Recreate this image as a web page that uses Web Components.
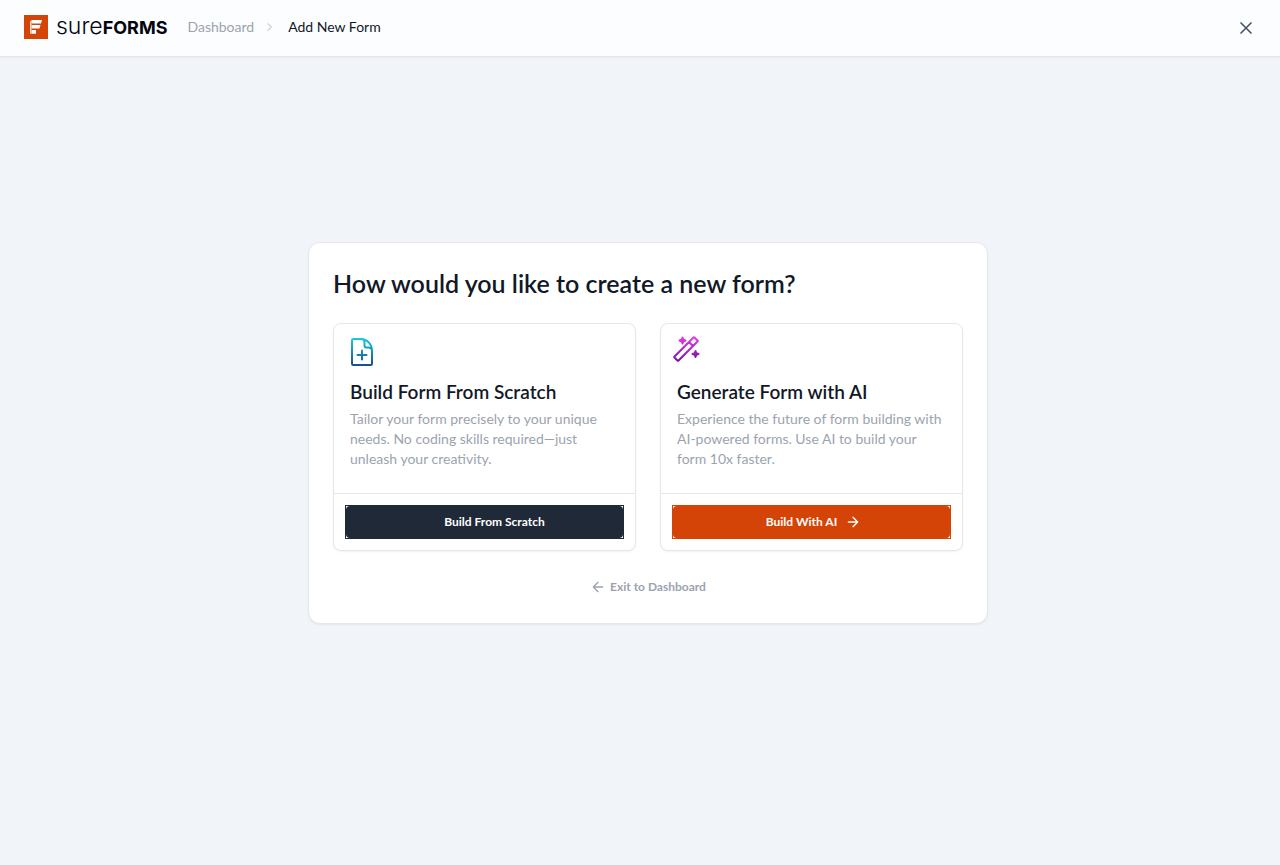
<!DOCTYPE html>
<html lang="en">
<head>
<meta charset="utf-8">
<meta name="viewport" content="width=device-width, initial-scale=1">
<title>Add New Form – SureForms</title>
<style>
  body {
    margin: 0;
    min-height: 100vh;
    background: #f1f5f9;
    color: #111827;
    font-family: Lato, "Liberation Sans", sans-serif;
    font-size: 14px;
    line-height: 20px;
  }
</style>
</head>
<body>
<new-form-page></new-form-page>

<template id="tpl-page">
  <style>
    :host { display: flex; flex-direction: column; min-height: 100vh; }
    main {
      flex: 1;
      display: flex;
      align-items: center;
      justify-content: center;
      padding: 0 0 57px 16px;
    }
  </style>
  <top-bar></top-bar>
  <main>
    <creation-panel heading="How would you like to create a new form?">
      <option-card heading="Build Form From Scratch" action="Build From Scratch" variant="dark">
        <svg slot="icon" width="32" height="32" viewBox="0 0 32 32" fill="none" stroke="url(#g-file)" stroke-width="2" stroke-linecap="round" stroke-linejoin="round" aria-hidden="true">
          <defs><linearGradient id="g-file" gradientUnits="userSpaceOnUse" x1="16" y1="3" x2="16" y2="29"><stop offset="0" stop-color="#17c9d6"/><stop offset="1" stop-color="#164f94"/></linearGradient></defs>
          <path d="M16 3H7.300A1.300 1.300 0 0 0 6 4.300V27.700A1.300 1.300 0 0 0 7.300 29H24.700A1.300 1.300 0 0 0 26 27.700V15C26 13 24.500 11.500 22.500 11.500H20.500A2 2 0 0 1 18.500 9.500V6.500C18.500 4.500 17.500 3 15 3C21 3 26 8 26 15M11.500 19H20.500M16 14.500V23.500"/>
        </svg>
        Tailor your form precisely to your unique needs. No coding skills required—just unleash your creativity.
      </option-card>
      <option-card heading="Generate Form with AI" action="Build With AI" variant="accent">
        <svg slot="icon" width="32" height="32" viewBox="0 0 32 32" fill="none" stroke="url(#g-wand)" stroke-width="2" stroke-linecap="round" stroke-linejoin="round" aria-hidden="true">
          <defs><linearGradient id="g-wand" gradientUnits="userSpaceOnUse" x1="16" y1="3" x2="16" y2="29"><stop offset="0" stop-color="#f436f0"/><stop offset="1" stop-color="#64189a"/></linearGradient></defs>
          <path d="M4.300 23.700L23.700 4.300A.5 .5 0 0 1 24.300 4.300L27.700 7.700A.5 .5 0 0 1 27.700 8.300L8.300 27.700A.5 .5 0 0 1 7.700 27.700L4.300 24.300A.5 .5 0 0 1 4.300 23.700ZM19 9L23 13"/>
          <path fill="url(#g-wand)" stroke-width="2" d="M12.500 4.500L13.300 6.700L15.500 7.500L13.300 8.300L12.500 10.500L11.700 8.300L9.500 7.500L11.700 6.700ZM25.500 18L26.300 20.200L28.500 21L26.300 21.800L25.500 24L24.700 21.800L22.500 21L24.700 20.200Z"/>
        </svg>
        Experience the future of form building with AI-powered forms. Use AI to build your form 10x faster.
      </option-card>
    </creation-panel>
  </main>
</template>

<template id="tpl-bar">
  <style>
    :host {
      display: block;
      background: #fcfdfe;
      border-bottom: 1px solid #e5e7eb;
      box-shadow: 0 1px 2px rgb(0 0 0 / 4%);
    }
    header { display: flex; align-items: center; height: 56px; padding: 0 24px; }
    nav { margin-left: 20px; padding-bottom: 2px; }
    ol { display: flex; align-items: center; list-style: none; margin: 0; padding: 0; }
    li { display: flex; align-items: center; }
    a { color: #9ca3af; text-decoration: none; }
    nav svg { margin: 0 10px 0 8px; }
    button {
      display: flex;
      margin-left: auto;
      padding: 0;
      border: 0;
      background: none;
      color: #4b5563;
      cursor: pointer;
    }
  </style>
  <header>
    <brand-logo></brand-logo>
    <nav aria-label="Breadcrumb">
      <ol>
        <li><a href="#dashboard">Dashboard</a>
          <svg width="16" height="16" viewBox="0 0 24 24" fill="none" stroke="#d1d5db" stroke-width="2" stroke-linecap="round" stroke-linejoin="round" aria-hidden="true"><path d="m9 17 5-5-5-5"/></svg></li>
        <li aria-current="page">Add New Form</li>
      </ol>
    </nav>
    <button type="button" aria-label="Close">
      <svg width="20" height="20" viewBox="0 0 24 24" fill="none" stroke="currentColor" stroke-width="2" stroke-linecap="round" aria-hidden="true"><path d="M18 6 6 18M6 6l12 12"/></svg>
    </button>
  </header>
</template>

<template id="tpl-logo">
  <style>
    :host {
      display: flex;
      align-items: center;
      gap: 8px;
      height: 24px;
      margin-bottom: 2px;
      color: #02040f;
      font-family: Inter, "Liberation Sans", sans-serif;
      line-height: 24px;
    }
    .name { display: flex; align-items: baseline; }
    .light { font-size: 23px; font-weight: 300; }
    .bold { font-size: 18px; font-weight: 700; }
  </style>
  <svg width="24" height="24" viewBox="0 0 24 24" aria-hidden="true">
    <path fill="#d54407" d="M0 0H24V24H0Z"/>
    <path fill="#fff" d="M7.500 5H18L17 8.500H7.500ZM7.500 10H16.500L15.500 13.500H7.500ZM7.500 15H12V18.700H7.500Z"/>
    <path fill="#fbd9c8" d="M7.500 5L6 6.500V18.700H7.500Z"/>
  </svg>
  <span class="name"><span class="light">sure</span><span class="bold">FORMS</span></span>
</template>

<template id="tpl-panel">
  <style>
    :host {
      display: block;
      box-sizing: border-box;
      width: 100%;
      max-width: 680px;
      padding: 24px;
      background: #fff;
      border: 1px solid #e5e7eb;
      border-radius: 12px;
      box-shadow: 0 1px 2px rgb(0 0 0 / 6%);
    }
    h1 { margin: 0 0 24px; font-size: 25px; line-height: 32px; font-weight: 600; }
    .options { display: grid; grid-template-columns: repeat(auto-fit, minmax(260px, 1fr)); gap: 24px; }
    a {
      display: flex;
      align-items: center;
      justify-content: center;
      gap: 4px;
      margin: 24px auto 0;
      padding: 4px 0;
      width: max-content;
      color: #9ca3af;
      font-size: 12px;
      line-height: 16px;
      font-weight: 700;
      text-decoration: none;
    }
  </style>
  <h1></h1>
  <div class="options"><slot></slot></div>
  <a href="#dashboard">
    <svg width="16" height="16" viewBox="0 0 24 24" fill="none" stroke="currentColor" stroke-width="2" stroke-linecap="round" stroke-linejoin="round" aria-hidden="true"><path d="m12 19-7-7 7-7M19 12H5"/></svg>
    Exit to Dashboard
  </a>
</template>

<template id="tpl-option">
  <style>
    :host {
      display: flex;
      flex-direction: column;
      background: #fff;
      border: 1px solid #e5e7eb;
      border-radius: 8px;
      box-shadow: 0 1px 2px rgb(0 0 0 / 5%);
    }
    :host([variant="dark"]) { --fill: #1f2937; }
    :host([variant="accent"]) { --fill: #d54407; }
    .icon { display: flex; padding: 12px 12px 0; }
    :host([variant="accent"]) .icon { padding: 9px 9px 3px; }
    .body { flex: 1; padding: 10px 16px 24px; color: #9ca3af; }
    h2 { margin: 0 0 3px; color: #111827; font-size: 19px; line-height: 28px; font-weight: 600; }
    p { margin: 0; }
    .foot { padding: 11px; border-top: 1px solid #e5e7eb; }
    .frame { border: 1px solid var(--fill); }
    button {
      display: flex;
      align-items: center;
      justify-content: center;
      gap: 4px;
      width: 100%;
      height: 32px;
      border: 0;
      border-radius: 4px;
      background: var(--fill);
      color: #fff;
      font: 700 12px/16px Lato, "Liberation Sans", sans-serif;
      cursor: pointer;
    }
    .label { padding: 0 4px; }
    .lead { width: 16px; }
    :host([variant="accent"]) .lead, :host([variant="dark"]) .arrow { display: none; }
  </style>
  <div class="icon"><slot name="icon"></slot></div>
  <div class="body"><h2></h2><p><slot></slot></p></div>
  <div class="foot"><div class="frame">
    <button type="button">
      <span class="lead"></span><span class="label"></span>
      <svg class="arrow" width="16" height="16" viewBox="0 0 24 24" fill="none" stroke="currentColor" stroke-width="2" stroke-linecap="round" stroke-linejoin="round" aria-hidden="true"><path d="M5 12h14M12 5l7 7-7 7"/></svg>
    </button>
  </div></div>
</template>

<script>
  class BaseElement extends HTMLElement {
    constructor() {
      super();
      const template = document.getElementById(this.constructor.template);
      this.attachShadow({ mode: "open" }).append(document.importNode(template.content, true));
    }
    fill(selector, attribute) {
      this.shadowRoot.querySelector(selector).textContent = this.getAttribute(attribute) || "";
    }
  }
  class BrandLogo extends BaseElement { static template = "tpl-logo"; }
  class TopBar extends BaseElement { static template = "tpl-bar"; }
  class OptionCard extends BaseElement {
    static template = "tpl-option";
    connectedCallback() { this.fill("h2", "heading"); this.fill(".label", "action"); }
  }
  class CreationPanel extends BaseElement {
    static template = "tpl-panel";
    connectedCallback() { this.fill("h1", "heading"); }
  }
  class NewFormPage extends BaseElement { static template = "tpl-page"; }

  customElements.define("brand-logo", BrandLogo);
  customElements.define("top-bar", TopBar);
  customElements.define("option-card", OptionCard);
  customElements.define("creation-panel", CreationPanel);
  customElements.define("new-form-page", NewFormPage);
</script>
</body>
</html>
